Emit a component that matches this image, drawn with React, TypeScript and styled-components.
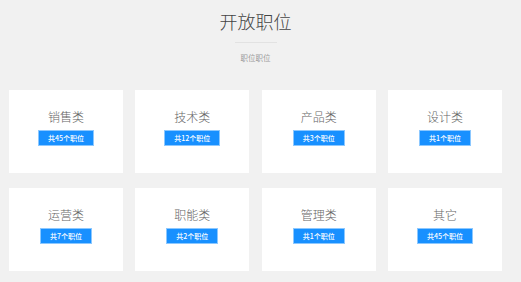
import React from "react";
import styled, { createGlobalStyle } from "styled-components";

const GlobalStyle = createGlobalStyle`
  body {
    margin: 0;
    background-color: #f1f1f1;
    font-family: "Noto Sans CJK SC", "Noto Sans", sans-serif;
  }
`;

const Page = styled.div`
  padding: 0 19px 0 9px;
`;

const Header = styled.div`
  display: flex;
  flex-direction: column;
  align-items: center;
  padding-top: 10px;
  height: 90px;
  box-sizing: border-box;
`;

const Title = styled.h1`
  margin: 0;
  font-size: 18px;
  line-height: 22px;
  font-weight: 300;
  color: #444;
`;

const Divider = styled.div`
  width: 42px;
  height: 1px;
  background-color: #e2e2e2;
  margin: 10px 0 10px 0;
`;

const SubTitle = styled.div`
  font-size: 7.5px;
  line-height: 10px;
  color: #999;
`;

const Grid = styled.div`
  display: grid;
  grid-template-columns: repeat(4, 1fr);
  column-gap: 12.6px;
  row-gap: 15px;
`;

const Card = styled.div`
  display: flex;
  flex-direction: column;
  align-items: center;
  height: 83px;
  padding-top: 20px;
  box-sizing: border-box;
  background-color: white;
`;

const CardTitle = styled.div`
  font-size: 12px;
  line-height: 14px;
  font-weight: 300;
  color: #666;
  margin-bottom: 6px;
`;

const CountButton = styled.div`
  height: 16px;
  line-height: 14px;
  padding: 0 9px;
  box-sizing: border-box;
  background-color: #1890ff;
  border: 1px solid #8cc8ff;
  color: white;
  font-size: 7px;
  font-weight: 500;
  cursor: pointer;
`;

const categories = [
  { name: "销售类", count: 45 },
  { name: "技术类", count: 12 },
  { name: "产品类", count: 3 },
  { name: "设计类", count: 1 },
  { name: "运营类", count: 7 },
  { name: "职能类", count: 2 },
  { name: "管理类", count: 1 },
  { name: "其它", count: 45 },
];

export default function App() {
  return (
    <Page>
      <GlobalStyle />
      <Header>
        <Title>开放职位</Title>
        <Divider />
        <SubTitle>职位职位</SubTitle>
      </Header>
      <Grid>
        {categories.map((c) => (
          <Card key={c.name}>
            <CardTitle>{c.name}</CardTitle>
            <CountButton>共{c.count}个职位</CountButton>
          </Card>
        ))}
      </Grid>
    </Page>
  );
}
